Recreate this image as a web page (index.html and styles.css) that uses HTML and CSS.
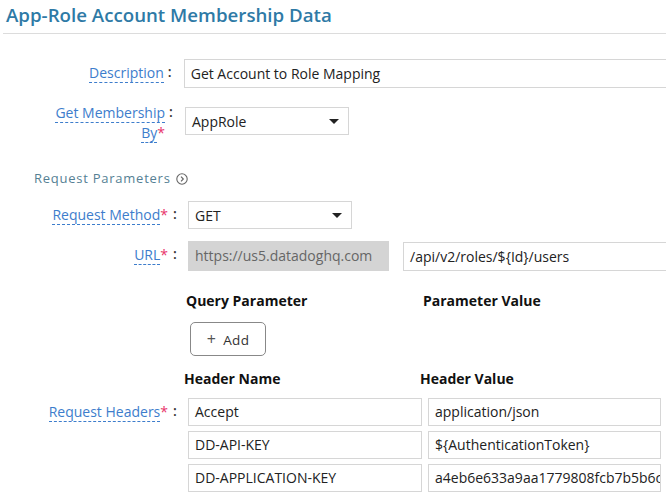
FILE: index.html
```html
<!DOCTYPE html>
<html>
<head>
<meta charset="utf-8">
<link rel="stylesheet" href="styles.css">
</head>
<body>
<div class="page">
  <h1 class="title">App-Role Account Membership Data</h1>

  <div class="section top">
    <div class="row">
      <div class="label"><span class="lbl">Description</span></div>
      <div class="colon">:</div>
      <div class="input wide">Get Account to Role Mapping</div>
    </div>
    <div class="row row-tall">
      <div class="label two"><span class="lbl">Get Membership</span><br><span class="lbl">By</span><span class="req">*</span></div>
      <div class="colon up">:</div>
      <div class="select s1">AppRole<span class="caret"></span></div>
    </div>
  </div>

  <div class="subhead">Request Parameters
    <svg class="ico" width="12" height="12" viewBox="0 0 12 12"><circle cx="6" cy="6" r="5.2" fill="none" stroke="#666" stroke-width="1.1"/><path d="M5 3.6 L7.3 6 L5 8.4" fill="none" stroke="#666" stroke-width="1.2"/></svg>
  </div>

  <div class="section params">
    <div class="row">
      <div class="label l2"><span class="lbl">Request Method</span><span class="req">*</span></div>
      <div class="colon c2">:</div>
      <div class="select s2">GET<span class="caret"></span></div>
    </div>
    <div class="row url-row">
      <div class="label l2"><span class="lbl">URL</span><span class="req">*</span></div>
      <div class="colon c2">:</div>
      <div class="input disabled">https://us5.datadoghq.com</div>
      <div class="input path">/api/v2/roles/${Id}/users</div>
    </div>

    <div class="heads q">
      <div class="h h1">Query Parameter</div>
      <div class="h h2">Parameter Value</div>
    </div>
    <div class="addwrap"><button class="add"><span class="plus">+</span>Add</button></div>

    <div class="heads hh">
      <div class="h h1">Header Name</div>
      <div class="h h2">Header Value</div>
    </div>

    <div class="row hdr">
      <div class="label l2"><span class="lbl">Request Headers</span><span class="req">*</span></div>
      <div class="colon c2">:</div>
      <div class="grid">
        <div class="input cell">Accept</div>
        <div class="input cell">application/json</div>
        <div class="input cell">DD-API-KEY</div>
        <div class="input cell">${AuthenticationToken}</div>
        <div class="input cell">DD-APPLICATION-KEY</div>
        <div class="input cell">a4eb6e633a9aa1779808fcb7b5b6c</div>
      </div>
    </div>
  </div>
</div>
</body>
</html>
```
FILE: styles.css
```css
* { box-sizing: border-box; }
body {
  margin: 0;
  font-family: "Open Sans", "DejaVu Sans", sans-serif;
  font-size: 14px;
  color: #222;
  background: #fff;
  overflow: hidden;
}
.page { padding: 0 0 0 3px; width: 700px; }
.title {
  margin: 0;
  padding: 2px 0 6px 3px;
  font-size: 18.7px;
  font-weight: 600;
  color: #2e7aa6;
  line-height: 25px;
  border-bottom: 1px solid #dcdcdc;
}
.section.top { padding-top: 25px; }
.row { display: flex; align-items: flex-start; }
.label {
  width: 162px;
  text-align: right;
  line-height: 20px;
  padding-top: 4px;
  color: #3d7dcc;
}
.label.two { padding-top: 0; margin-top: -4px; }
.lbl { border-bottom: 1px dashed #3d7dcc; }
.req { color: #e8336b; }
.colon {
  width: 20px;
  padding-left: 4px;
  line-height: 20px;
  padding-top: 3px;
  color: #333;
  font-weight: 600;
}
.colon.up { padding-top: 0; margin-top: -5px; }
.input {
  height: 29px;
  border: 1px solid #d6d6d6;
  padding: 0 6px;
  line-height: 27px;
  white-space: nowrap;
  overflow: hidden;
  background: #fff;
}
.wide { width: 520px; }
.row-tall { margin-top: 19px; }
.select {
  position: relative;
  height: 28px;
  border: 1px solid #d6d6d6;
  padding: 0 6px;
  line-height: 27px;
}
.s1 { width: 164px; }
.s2 { width: 164px; }
.caret {
  position: absolute;
  right: 9px;
  top: 11px;
  width: 0; height: 0;
  border-left: 5px solid transparent;
  border-right: 5px solid transparent;
  border-top: 5px solid #222;
}
.subhead {
  margin: 25px 0 0 31px;
  font-size: 13px;
  letter-spacing: 0.75px;
  color: #557f94;
  line-height: 20px;
  display: flex;
  align-items: center;
  gap: 5px;
}
.ico { margin-top: 2px; }
.section.params { padding-top: 13px; }
.l2 { width: 165px; }
.c2 { width: 20px; padding-left: 5px; }
.url-row { margin-top: 12px; }
.disabled {
  width: 201px;
  height: 30px;
  background: #d4d4d4;
  border-color: #d4d4d4;
  color: #666;
  line-height: 28px;
}
.path { margin-left: 14px; width: 280px; height: 29px; margin-top: 1px; }
.heads { display: flex; font-weight: 700; line-height: 20px; color: #111; }
.heads.q { margin-top: 20px; padding-left: 183px; }
.heads.q .h1 { width: 237px; }
.addwrap { padding: 11px 0 0 187px; }
.add {
  font-family: "Open Sans", "DejaVu Sans", sans-serif;
  font-size: 13.5px;
  color: #333;
  width: 76px;
  height: 34px;
  border: 1px solid #888;
  border-radius: 5px;
  background: #fff;
  letter-spacing: 0.3px;
}
.plus { font-size: 16px; margin-right: 7px; color: #555; }
.heads.hh { margin-top: 13px; padding-left: 181px; }
.heads.hh .h1 { width: 236px; }
.hdr { margin-top: 9px; }
.grid {
  display: grid;
  grid-template-columns: 234px 233px;
  column-gap: 6px;
  row-gap: 5px;
}
.cell { height: 28px; line-height: 26px; }
```
